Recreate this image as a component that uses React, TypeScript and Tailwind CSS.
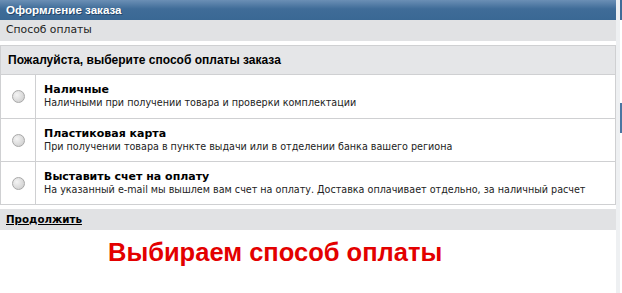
import React from 'react';

const options = [
  {
    title: 'Наличные',
    desc: 'Наличными при получении товара и проверки комплектации',
  },
  {
    title: 'Пластиковая карта',
    desc: 'При получении товара в пункте выдачи или в отделении банка вашего региона',
  },
  {
    title: 'Выставить счет на оплату',
    desc: 'На указанный e-mail мы вышлем вам счет на оплату. Доставка оплачивает отдельно, за наличный расчет',
  },
];

function Radio() {
  return (
    <span className="block w-[13px] h-[13px] rounded-full border border-[#a8a8a8] bg-[radial-gradient(circle_at_35%_35%,#f4f4f4,#c9c9c9)]" />
  );
}

export default function App() {
  return (
    <div className="w-[622px] h-[293px] bg-white flex font-['DejaVu_Sans',sans-serif] text-[11px] text-[#222]">
      <div className="w-[616px] flex flex-col">
        <div className="h-[20px] bg-[linear-gradient(#6b8fb5,#3f6c98_45%,#3a6894)] px-[6px] flex items-center text-white font-bold text-[11.6px] font-['Liberation_Sans',sans-serif] [text-shadow:1px_1px_0_#24466a]">
          Оформление заказа
        </div>
        <div className="h-[21px] bg-[#e1e2e4] px-[6px] flex items-center text-[10.8px]">Способ оплаты</div>

        <div className="mt-[4px] border border-[#cfd0d2]">
          <div className="h-[29px] bg-[#e5e6e8] px-[7px] flex items-center font-bold text-[12px] text-black font-['Liberation_Sans',sans-serif] border-b border-[#cfd0d2]">
            Пожалуйста, выберите способ оплаты заказа
          </div>
          {options.map((o, i) => (
            <div key={i} className={`flex h-[43px] ${i > 0 ? 'border-t border-[#cfd0d2]' : ''}`}>
              <div className="w-[35px] shrink-0 border-r border-[#cfd0d2] flex items-center justify-center">
                <Radio />
              </div>
              <div className="pl-[8px] pt-[8px] leading-[13px] whitespace-nowrap">
                <div className="font-bold text-black text-[11px]">{o.title}</div>
                <div className="text-[9.6px]">{o.desc}</div>
              </div>
            </div>
          ))}
        </div>

        <div className="mt-[4px] h-[21px] bg-[#e1e2e4] px-[6px] flex items-center">
          <a href="#" className="font-bold text-black underline text-[10.3px]">Продолжить</a>
        </div>

        <div className="pl-[108px] pt-[7px] text-[#e30000] font-bold text-[25.5px] leading-[30px] font-['Liberation_Sans',sans-serif]">
          Выбираем способ оплаты
        </div>
      </div>
      <div className="w-[6px] flex">
        <div className="w-[4px] bg-[#eef0f2]" />
        <div className="w-[2px] flex flex-col">
          <div className="h-[20px] bg-[#3f6c98]" />
          <div className="h-[83px]" />
          <div className="h-[30px] bg-[#4a76a2]" />
        </div>
      </div>
    </div>
  );
}
